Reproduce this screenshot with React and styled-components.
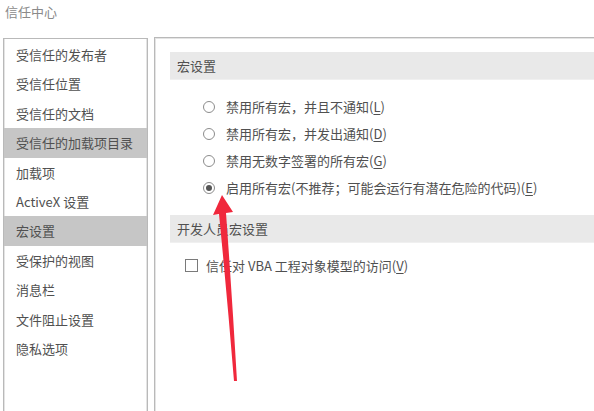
import React from "react";
import styled, { createGlobalStyle } from "styled-components";

const Global = createGlobalStyle`
  html, body { margin: 0; padding: 0; background: #fff; }
  body {
    font-family: "Microsoft YaHei", "Noto Sans CJK SC", "Noto Sans", sans-serif;
    color: #4d4d4d;
    overflow: hidden;
  }
`;

const Page = styled.div`
  position: relative;
  width: 594px;
  height: 411px;
  overflow: hidden;
`;

const Title = styled.div`
  height: 37px;
  padding-left: 5px;
  font-size: 13px;
  line-height: 24px;
  color: #8a8a8a;
`;

const Body = styled.div`
  display: flex;
  gap: 6px;
  padding-left: 3px;
  height: 400px;
`;

const Nav = styled.ul`
  list-style: none;
  margin: 0;
  padding: 1px 0 0;
  width: 143px;
  margin-top: 1px;
  border: 1px solid #b9b9b9;
  box-shadow: inset 1px 0 #e4e4e4, inset -1px 0 #e4e4e4;
  border-bottom: none;
`;

const NavItem = styled.li`
  height: 29.4px;
  line-height: 29.4px;
  padding-left: 12px;
  font-size: 13px;
  color: #505050;
  background: ${p => (p.$active ? "#c6c6c6" : "transparent")};
  white-space: nowrap;
`;

const Main = styled.div`
  flex: 1;
  border-left: 1px solid #b9b9b9;
  border-top: 1px solid #b9b9b9;
  box-shadow: inset 1px 1px #e4e4e4;
  padding: 14px 0 0 15px;
`;

const Section = styled.div`
  height: 27px;
  line-height: 27px;
  background: #e9e9e9;
  border-bottom: 1px solid #f0f0f0;
  padding-left: 7px;
  font-size: 13px;
  color: #505050;
`;

const Options = styled.div`
  display: flex;
  flex-direction: column;
  padding: 13px 0 0 33px;
  height: 122px;
`;

const Option = styled.label`
  display: flex;
  align-items: center;
  height: 27px;
  font-size: 13px;
  color: #505050;
  white-space: nowrap;
`;

const Radio = styled.span`
  box-sizing: border-box;
  width: 12px;
  height: 12px;
  border: 1px solid #8c8c8c;
  border-radius: 50%;
  margin-right: 11px;
  display: flex;
  align-items: center;
  justify-content: center;
  &::after {
    content: "";
    width: 6px;
    height: 6px;
    border-radius: 50%;
    background: ${p => (p.$checked ? "#555" : "transparent")};
  }
`;

const Check = styled.span`
  box-sizing: border-box;
  width: 13px;
  height: 13px;
  border: 1px solid #7a7a7a;
  margin-right: 8px;
`;

const Checks = styled.div`
  padding: 9px 0 0 15px;
`;

const Key = styled.span`
  text-decoration: underline;
  text-underline-offset: 2px;
`;

const Arrow = styled.svg`
  position: absolute;
  left: 205px;
  top: 185px;
  pointer-events: none;
`;

const navItems = [
  "受信任的发布者",
  "受信任位置",
  "受信任的文档",
  "受信任的加载项目录",
  "加载项",
  "ActiveX 设置",
  "宏设置",
  "受保护的视图",
  "消息栏",
  "文件阻止设置",
  "隐私选项",
];

const active = ["受信任的加载项目录", "宏设置"];

const radios = [
  ["禁用所有宏，并且不通知", "L", false],
  ["禁用所有宏，并发出通知", "D", false],
  ["禁用无数字签署的所有宏", "G", false],
  ["启用所有宏(不推荐；可能会运行有潜在危险的代码)", "E", true],
];

export default function App() {
  return (
    <Page>
      <Global />
      <Title>信任中心</Title>
      <Body>
        <Nav>
          {navItems.map(n => (
            <NavItem key={n} $active={active.includes(n)}>{n}</NavItem>
          ))}
        </Nav>
        <Main>
          <Section>宏设置</Section>
          <Options>
            {radios.map(([t, k, c]) => (
              <Option key={k}>
                <Radio $checked={c} />
                {t}(<Key>{k}</Key>)
              </Option>
            ))}
          </Options>
          <Section>开发人员宏设置</Section>
          <Checks>
            <Option>
              <Check />
              信任对 VBA 工程对象模型的访问(<Key>V</Key>)
            </Option>
          </Checks>
        </Main>
      </Body>
      <Arrow width="40" height="205" viewBox="0 0 40 205">
        <path
          d="M17 10 L8 30 L14 29 Q22 110 29 196 L32 196 Q27 110 21 28 L28 27 Z"
          fill="#f0283c"
        />
      </Arrow>
    </Page>
  );
}
